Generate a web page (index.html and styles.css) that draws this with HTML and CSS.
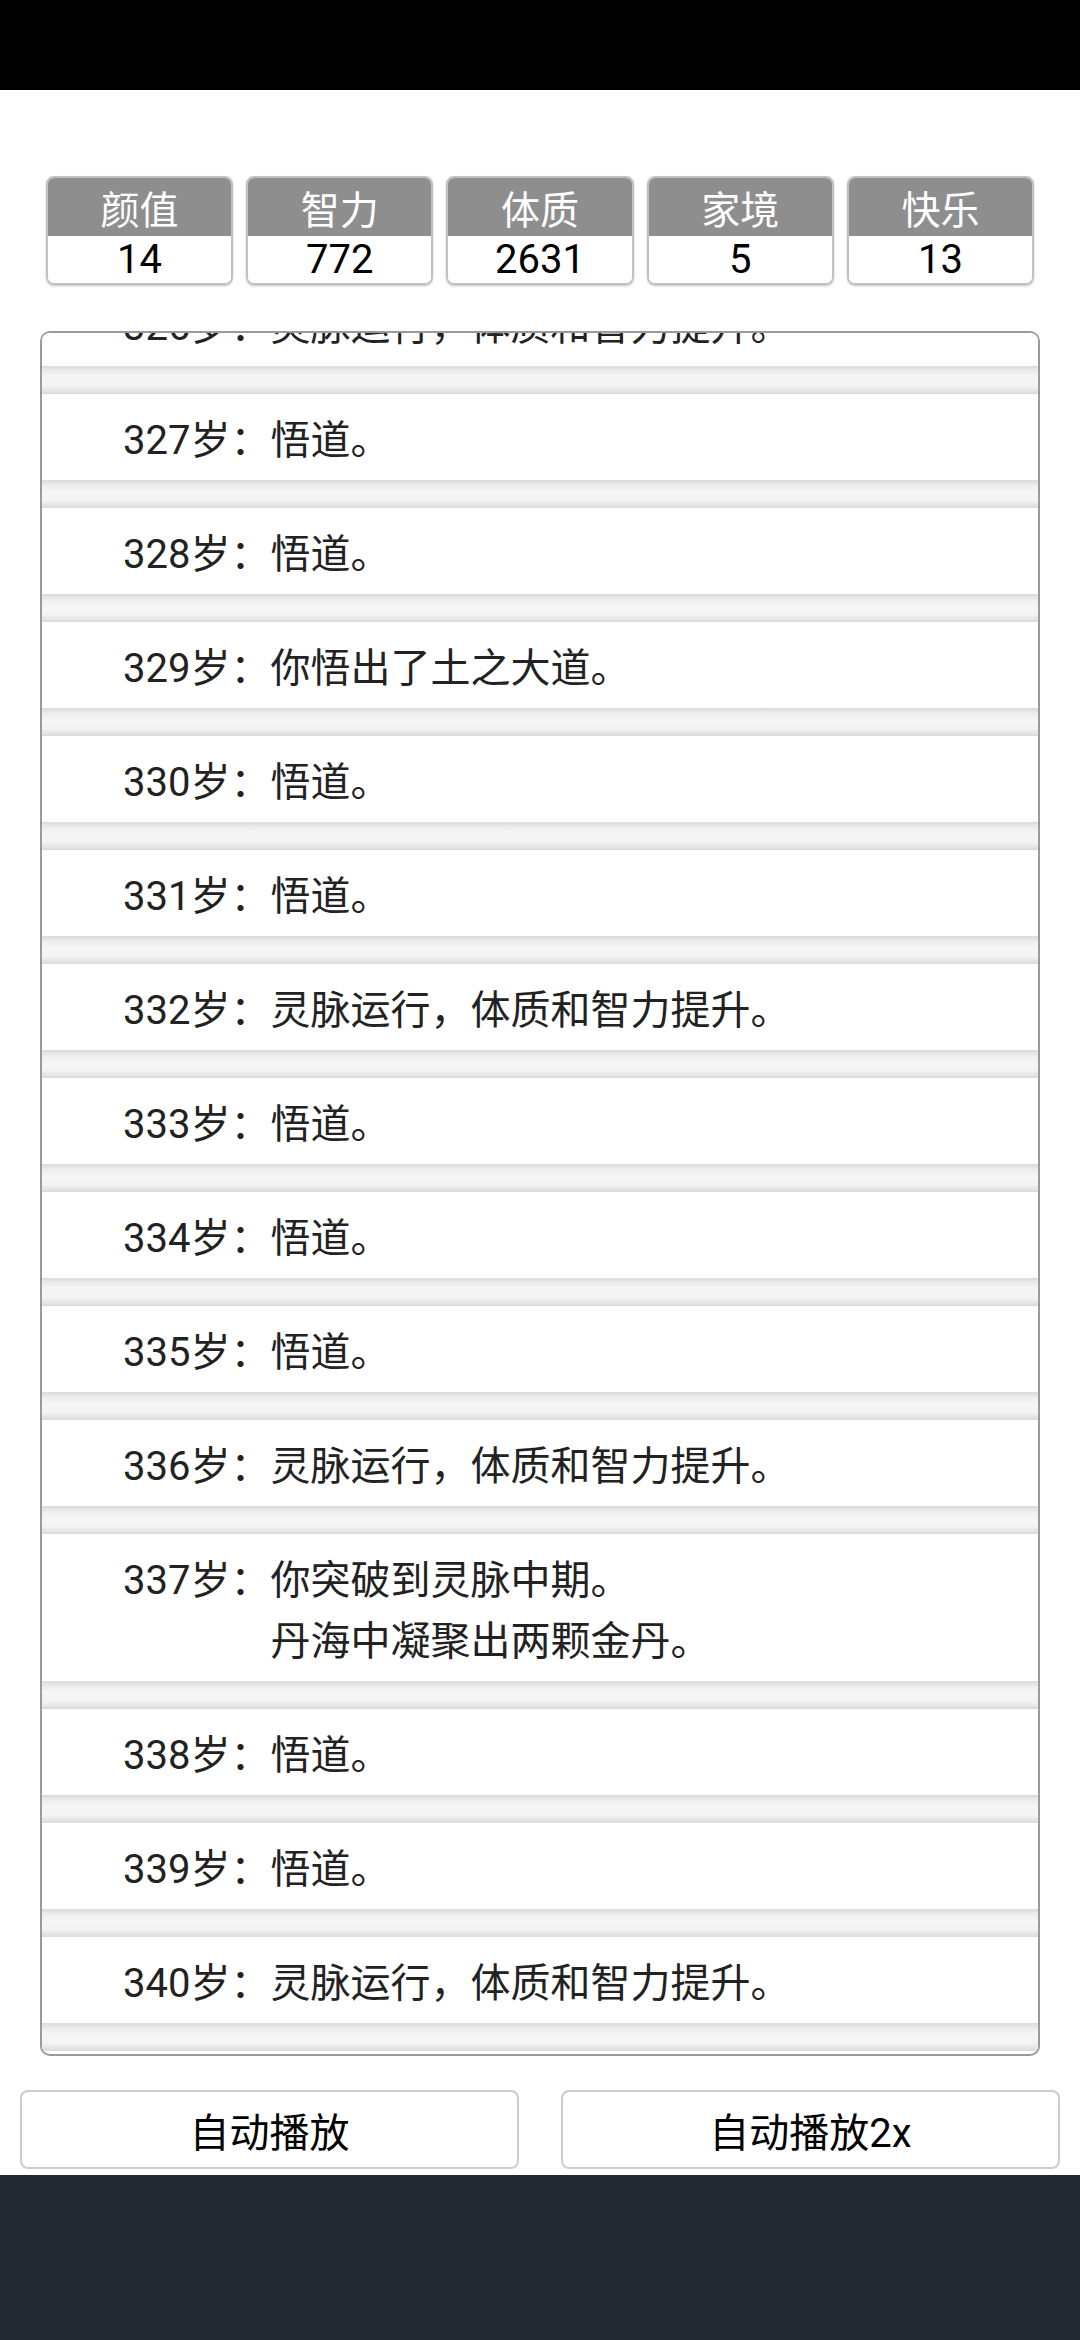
FILE: index.html
```html
<!DOCTYPE html>
<html lang="zh-CN">
<head>
<meta charset="utf-8">
<title>人生重开</title>
<link rel="stylesheet" href="styles.css">
</head>
<body>
<div class="statusbar"></div>
<div class="stats">
  <div class="stat"><div class="stat-name">颜值</div><div class="stat-value">14</div></div>
  <div class="stat"><div class="stat-name">智力</div><div class="stat-value">772</div></div>
  <div class="stat"><div class="stat-name">体质</div><div class="stat-value">2631</div></div>
  <div class="stat"><div class="stat-name">家境</div><div class="stat-value">5</div></div>
  <div class="stat"><div class="stat-name">快乐</div><div class="stat-value">13</div></div>
</div>
<div class="log">
  <ul class="log-list">
    <li class="entry"><span class="age">326岁：</span><span class="text">灵脉运行，体质和智力提升。</span></li>
    <li class="entry"><span class="age">327岁：</span><span class="text">悟道。</span></li>
    <li class="entry"><span class="age">328岁：</span><span class="text">悟道。</span></li>
    <li class="entry"><span class="age">329岁：</span><span class="text">你悟出了土之大道。</span></li>
    <li class="entry"><span class="age">330岁：</span><span class="text">悟道。</span></li>
    <li class="entry"><span class="age">331岁：</span><span class="text">悟道。</span></li>
    <li class="entry"><span class="age">332岁：</span><span class="text">灵脉运行，体质和智力提升。</span></li>
    <li class="entry"><span class="age">333岁：</span><span class="text">悟道。</span></li>
    <li class="entry"><span class="age">334岁：</span><span class="text">悟道。</span></li>
    <li class="entry"><span class="age">335岁：</span><span class="text">悟道。</span></li>
    <li class="entry"><span class="age">336岁：</span><span class="text">灵脉运行，体质和智力提升。</span></li>
    <li class="entry"><span class="age">337岁：</span><span class="text">你突破到灵脉中期。<br>丹海中凝聚出两颗金丹。</span></li>
    <li class="entry"><span class="age">338岁：</span><span class="text">悟道。</span></li>
    <li class="entry"><span class="age">339岁：</span><span class="text">悟道。</span></li>
    <li class="entry"><span class="age">340岁：</span><span class="text">灵脉运行，体质和智力提升。</span></li>
  </ul>
</div>
<div class="controls">
  <button class="btn">自动播放</button>
  <button class="btn">自动播放2x</button>
</div>
<div class="navbar"></div>
</body>
</html>
```

FILE: styles.css
```css
* { box-sizing: border-box; }

html, body {
  margin: 0;
  padding: 0;
}

body {
  width: 1080px;
  height: 2340px;
  background: #ffffff;
  font-family: Roboto, "Noto Sans CJK SC", sans-serif;
  color: #222222;
  overflow: hidden;
  display: flex;
  flex-direction: column;
}

.statusbar {
  height: 90px;
  background: #000000;
  flex: none;
}

.stats {
  display: flex;
  gap: 13px;
  padding: 86px 46px 0 46px;
  flex: none;
}

.stat {
  flex: 1;
  height: 109px;
  border: 2px solid #c2c2c2;
  border-radius: 8px;
  overflow: hidden;
  box-shadow: 0 1px 2px rgba(0, 0, 0, 0.25);
  display: flex;
  flex-direction: column;
}

.stat-name {
  height: 58px;
  background: #8e8e8e;
  color: #ffffff;
  font-size: 39px;
  line-height: 58px;
  text-align: center;
  font-family: "Noto Sans CJK SC", sans-serif;
}

.stat-value {
  flex: 1;
  background: #ffffff;
  color: #000000;
  font-size: 40px;
  line-height: 47px;
  text-align: center;
}

.log {
  margin: 46px 40px 0 40px;
  height: 1725px;
  border: 2px solid #9a9a9a;
  border-radius: 10px;
  overflow: hidden;
  background: #ffffff;
  flex: none;
}

.log-list {
  list-style: none;
  margin: -53px 0 0 0;
  padding: 0;
}

.entry {
  display: flex;
  padding: 16px 0 37px 81px;
  font-size: 40px;
  line-height: 61px;
  color: #222222;
  background:
    linear-gradient(to bottom,
      #dadada 0px,
      #ececec 5px,
      #f6f6f6 12px,
      #f4f4f4 20px,
      #e2e2e2 26px,
      #d9d9d9 28px) bottom / 100% 28px no-repeat,
    #ffffff;
}

.age {
  flex: none;
  white-space: nowrap;
}

.text {
  flex: 1;
}

.controls {
  display: flex;
  gap: 42px;
  padding: 34px 20px 0 20px;
  flex: none;
}

.btn {
  flex: 1;
  height: 79px;
  border: 2px solid #cccccc;
  border-radius: 8px;
  background: #ffffff;
  color: #000000;
  font-family: Roboto, "Noto Sans CJK SC", sans-serif;
  font-size: 40px;
  padding: 0;
}

.navbar {
  margin-top: 6px;
  flex: 1;
  background: #222731;
}
```
